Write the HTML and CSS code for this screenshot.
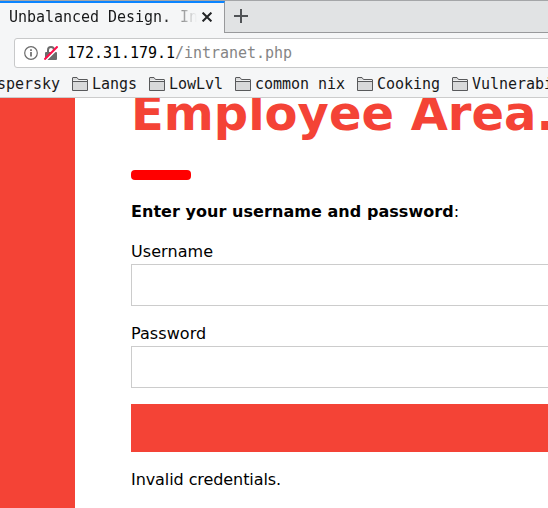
FILE: index.html
```html
<!DOCTYPE html>
<html lang="en">
<head>
<meta charset="utf-8">
<title>Unbalanced Design. Intranet</title>
<link rel="stylesheet" href="styles.css">
</head>
<body>
<svg width="0" height="0" class="defs">
  <symbol id="folder" viewBox="0 0 16 14">
    <path d="M.5 13.5V1Q.5.5 1 .5h4l1.5 2h8.500q.5 0 .5.5v10.500z" fill="#d8d9da" stroke="#58595b"/>
    <path d="M1 4.500h14" stroke="#58595b"/>
    <path d="M1 3.500h14" stroke="#eeeff0"/>
  </symbol>
</svg>
<header class="chrome">
  <div class="tabs">
    <div class="tab">
      <span class="tab-title">Unbalanced Design. Intranet</span>
      <svg class="close" width="10" height="10" viewBox="0 0 10 10"><path d="M.6.6l8.800 8.800M9.400.6L.6 9.400" stroke="#222426" stroke-width="2"/></svg>
    </div>
    <div class="tab-strip">
      <svg width="14" height="14" viewBox="0 0 14 14"><path d="M7 0v14M0 7h14" stroke="#505356" stroke-width="2"/></svg>
    </div>
  </div>
  <div class="toolbar">
    <div class="address">
      <svg width="14" height="14" viewBox="0 0 14 14"><circle cx="7" cy="7" r="6.300" fill="none" stroke="#6b6b6b" stroke-width="1.200"/><path d="M7 6v4.500M7 3.200v1.700" stroke="#6b6b6b" stroke-width="1.700"/></svg>
      <svg class="lock" width="14" height="14" viewBox="0 0 14 14"><path d="M4 7V4a3 3 0 0 1 6 0v3" fill="none" stroke="#6b6b6b" stroke-width="2"/><rect x="1" y="6" width="12" height="8" rx="1" fill="#6b6b6b"/><path d="M1.500 14.500L14.500 1.500" stroke="#fff" stroke-width="2"/><path d="M.4 13.600L13.600.4" stroke="#ff0f4b" stroke-width="2"/></svg>
      <span class="url">172.31.179.1<span class="path">/intranet.php</span></span>
    </div>
  </div>
  <nav class="bookmarks">
    <span class="bookmark">spersky</span>
    <span class="bookmark"><svg width="16" height="14"><use href="#folder"/></svg>Langs</span>
    <span class="bookmark"><svg width="16" height="14"><use href="#folder"/></svg>LowLvl</span>
    <span class="bookmark"><svg width="16" height="14"><use href="#folder"/></svg>common nix</span>
    <span class="bookmark"><svg width="16" height="14"><use href="#folder"/></svg>Cooking</span>
    <span class="bookmark"><svg width="16" height="14"><use href="#folder"/></svg>Vulnerabilities</span>
  </nav>
</header>
<div class="page">
  <aside class="sidebar"></aside>
  <main class="content">
    <h1>Employee Area.</h1>
    <hr>
    <p class="prompt"><b>Enter your username and password</b>:</p>
    <form>
      <div class="field"><label for="user">Username</label><input id="user" type="text"></div>
      <div class="field"><label for="pass">Password</label><input id="pass" type="password"></div>
      <button type="button" aria-label="Login"></button>
    </form>
    <p class="message">Invalid credentials.</p>
  </main>
</div>
</body>
</html>
```
FILE: styles.css
```css
* { box-sizing: border-box; }
body {
  margin: 0;
  width: 548px;
  height: 508px;
  overflow: hidden;
  display: flex;
  flex-direction: column;
  background: #fff;
  color: #000;
  font: 16px/24px "DejaVu Sans", sans-serif;
}
.defs { display: none; }
svg { display: block; flex: none; }

.chrome {
  flex: none;
  height: 98px;
  overflow: hidden;
  background: #f5f6f7;
  border-bottom: 1px solid #ccc;
  color: #18191a;
  font: 15px/20px "DejaVu Sans Mono", monospace;
  letter-spacing: -0.03px;
  white-space: nowrap;
}
.tabs { display: flex; height: 33px; border-top: 1px solid #a4a6a8; }
.tab {
  display: flex;
  align-items: center;
  width: 225px;
  padding: 0 12px 2px 9px;
  border-top: 2px solid #0a84ff;
  border-right: 1px solid #98999b;
}
.tab-title {
  width: 189px;
  overflow: hidden;
  -webkit-mask-image: linear-gradient(to right, #000 155px, transparent 188px);
  mask-image: linear-gradient(to right, #000 155px, transparent 188px);
}
.close { margin-left: 4px; }
.tab-strip {
  flex: 1;
  padding: 8px 9px;
  background: #e1e3e4;
  border-bottom: 1px solid #98999b;
}
.toolbar { height: 35px; padding: 5px 0 0 14px; }
.address {
  display: flex;
  align-items: center;
  width: 600px;
  height: 30px;
  padding-left: 9px;
  background: #fff;
  border: 1px solid #c8c9ca;
  border-radius: 3px;
}
.lock { margin-left: 6px; }
.url { margin-left: 9px; color: #000; }
.path { color: #858585; }
.bookmarks { display: flex; gap: 12px; padding-top: 6px; margin-left: -3px; }
.bookmark { display: flex; align-items: center; gap: 4px; flex: none; }

.page { display: flex; flex: 1; min-height: 0; overflow: hidden; }
.sidebar { flex: none; width: 75px; background: #f44336; }
.content { flex: none; width: 473px; padding-left: 56px; }
h1 {
  margin: -21px 0 0;
  color: #f44336;
  font-size: 48px;
  line-height: 72px;
  white-space: nowrap;
}
hr {
  width: 60px;
  height: 10px;
  margin: 21px 0 20px;
  border: 0;
  border-radius: 4px;
  background: red;
}
p { margin: 0; }
.prompt { margin-bottom: 16px; letter-spacing: 0.05px; }
.field { margin-bottom: 16px; }
label { display: block; height: 24px; letter-spacing: 0.07px; }
input {
  display: block;
  width: calc(100% + 16px);
  height: 42px;
  padding: 8px;
  border: 1px solid #ccc;
}
button { display: block; width: 100%; height: 48px; border: 0; background: #f44336; }
.message { margin-top: 16px; letter-spacing: -0.08px; }
```
